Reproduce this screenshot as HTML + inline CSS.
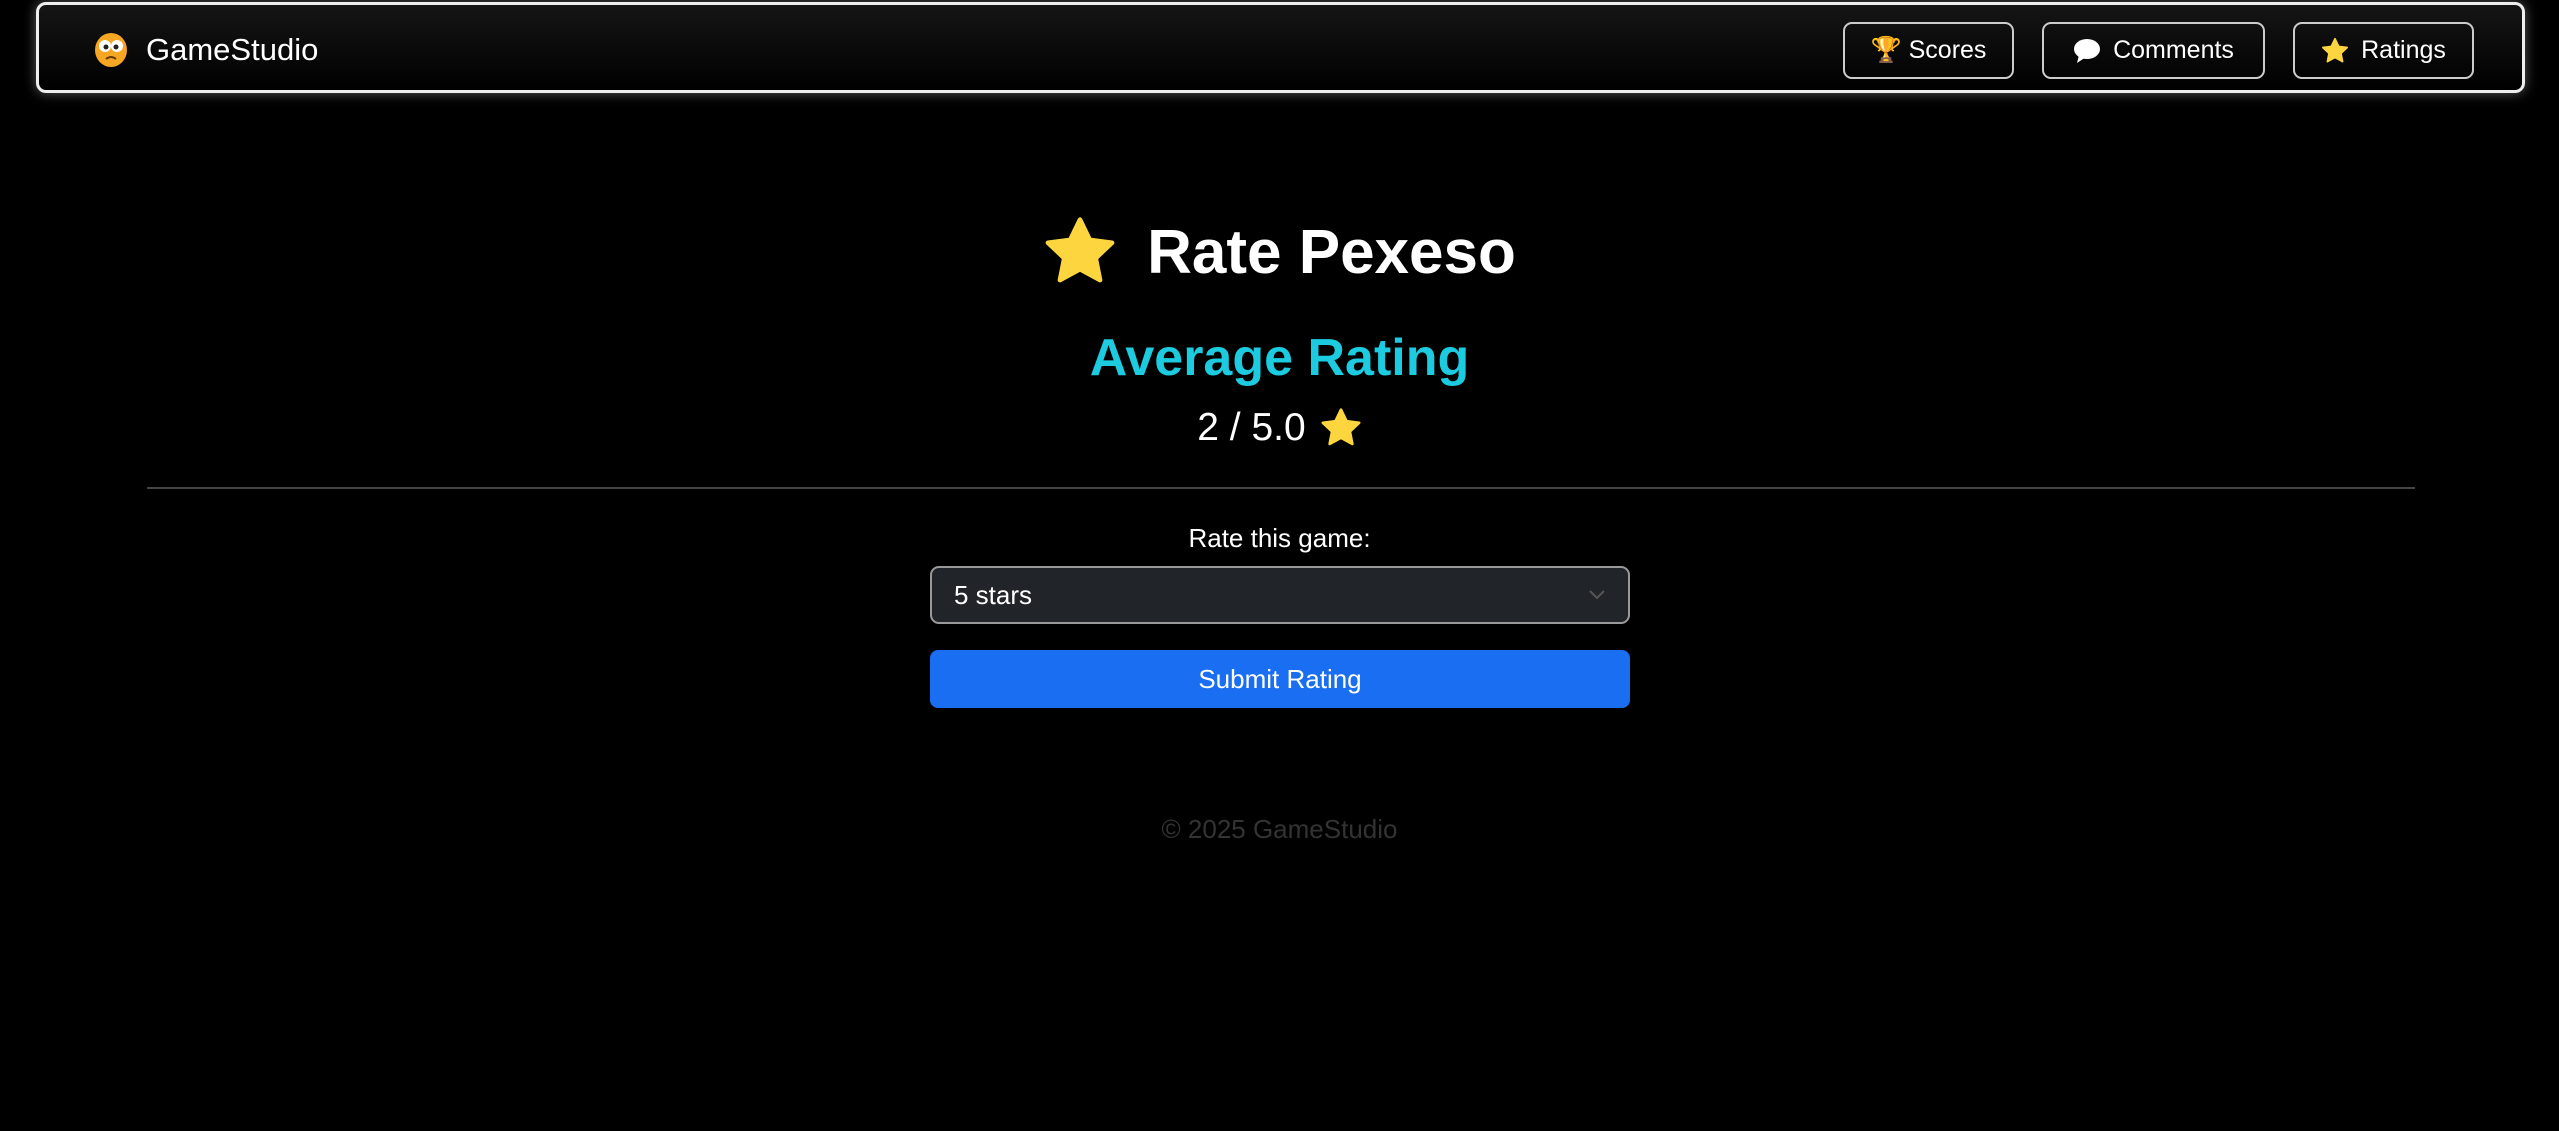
<!DOCTYPE html>
<html><head><meta charset="utf-8"><style>
*{box-sizing:border-box;margin:0;padding:0}
body{width:2559px;height:1131px;background:#000;font-family:"Liberation Sans","DejaVu Sans",sans-serif;color:#fff;position:relative;overflow:hidden}
.nav{position:absolute;left:36px;top:2px;width:2489px;height:91px;border:3px solid #eee;border-radius:10px;background:linear-gradient(#151515,#000);box-shadow:0 0 12px rgba(255,255,255,.35)}
.brand{position:absolute;left:55px;top:27px;font-size:31px;display:flex;align-items:center;gap:18px}
.btn{position:absolute;top:17px;height:57px;border:2px solid #ccc;border-radius:9px;font-size:25px;display:flex;align-items:center;justify-content:center;gap:12px}
.c{position:absolute;left:0;width:100%;text-align:center}
</style></head><body>
<div class="nav">
<div class="brand"><svg width="34" height="36" viewBox="0 0 34 36"><ellipse cx="17" cy="18" rx="16" ry="17" fill="#f5a623"/><circle cx="11" cy="14" r="6" fill="#fff"/><circle cx="23" cy="14" r="6" fill="#fff"/><circle cx="12" cy="15" r="2.5" fill="#222"/><circle cx="22" cy="15" r="2.5" fill="#222"/><path d="M12 27q5-4 10 0" stroke="#6b3a00" stroke-width="2" fill="none"/></svg>GameStudio</div>
<div class="btn" style="left:1804px;width:171px">🏆 Scores</div>
<div class="btn" style="left:2003px;width:223px"><svg width="28" height="26" viewBox="0 0 28 26"><ellipse cx="14" cy="11" rx="13" ry="10" fill="#fff"/><path d="M6 17l-2 8 9-6z" fill="#fff"/></svg>Comments</div>
<div class="btn" style="left:2254px;width:181px"><svg width="28" height="28" viewBox="0 0 24 24"><path d="M12 1.5l3.2 6.6 7.2.9-5.3 5 1.4 7.1L12 17.6l-6.5 3.5 1.4-7.1-5.3-5 7.2-.9z" fill="#fcd53f" stroke="#fcd53f" stroke-width="1.5" stroke-linejoin="round"/></svg>Ratings</div>
</div>
<div class="c" style="top:215px;font-size:62px;font-weight:bold;display:flex;justify-content:center;align-items:center;gap:30px"><svg width="74" height="74" viewBox="0 0 24 24"><path d="M12 1.5l3.2 6.6 7.2.9-5.3 5 1.4 7.1L12 17.6l-6.5 3.5 1.4-7.1-5.3-5 7.2-.9z" fill="#fcd53f" stroke="#fcd53f" stroke-width="1.5" stroke-linejoin="round"/></svg><span>Rate Pexeso</span></div>
<div class="c" style="top:328px;font-size:52px;font-weight:bold;color:#1ccbe0">Average Rating</div>
<div class="c" style="top:406px;font-size:39px;display:flex;justify-content:center;align-items:center;gap:14px"><span>2 / 5.0</span><svg width="42" height="42" viewBox="0 0 24 24"><path d="M12 1.5l3.2 6.6 7.2.9-5.3 5 1.4 7.1L12 17.6l-6.5 3.5 1.4-7.1-5.3-5 7.2-.9z" fill="#fcd53f" stroke="#fcd53f" stroke-width="1.5" stroke-linejoin="round"/></svg></div>
<div style="position:absolute;left:147px;top:487px;width:2268px;height:2px;background:#444"></div>
<div class="c" style="top:523px;font-size:26px">Rate this game:</div>
<div style="position:absolute;left:930px;top:566px;width:700px;height:58px;background:#212529;border:2px solid #999;border-radius:9px;font-size:26px;padding-left:22px;line-height:54px">5 stars<svg style="position:absolute;right:22px;top:20px" width="18" height="12" viewBox="0 0 18 12"><path d="M2 3l7 7 7-7" stroke="#555" stroke-width="2" fill="none"/></svg></div>
<div style="position:absolute;left:930px;top:650px;width:700px;height:58px;background:#1a6ef2;border-radius:8px;font-size:26px;text-align:center;line-height:58px">Submit Rating</div>
<div class="c" style="top:814px;font-size:26px;color:#333">© 2025 GameStudio</div>
</body></html>
